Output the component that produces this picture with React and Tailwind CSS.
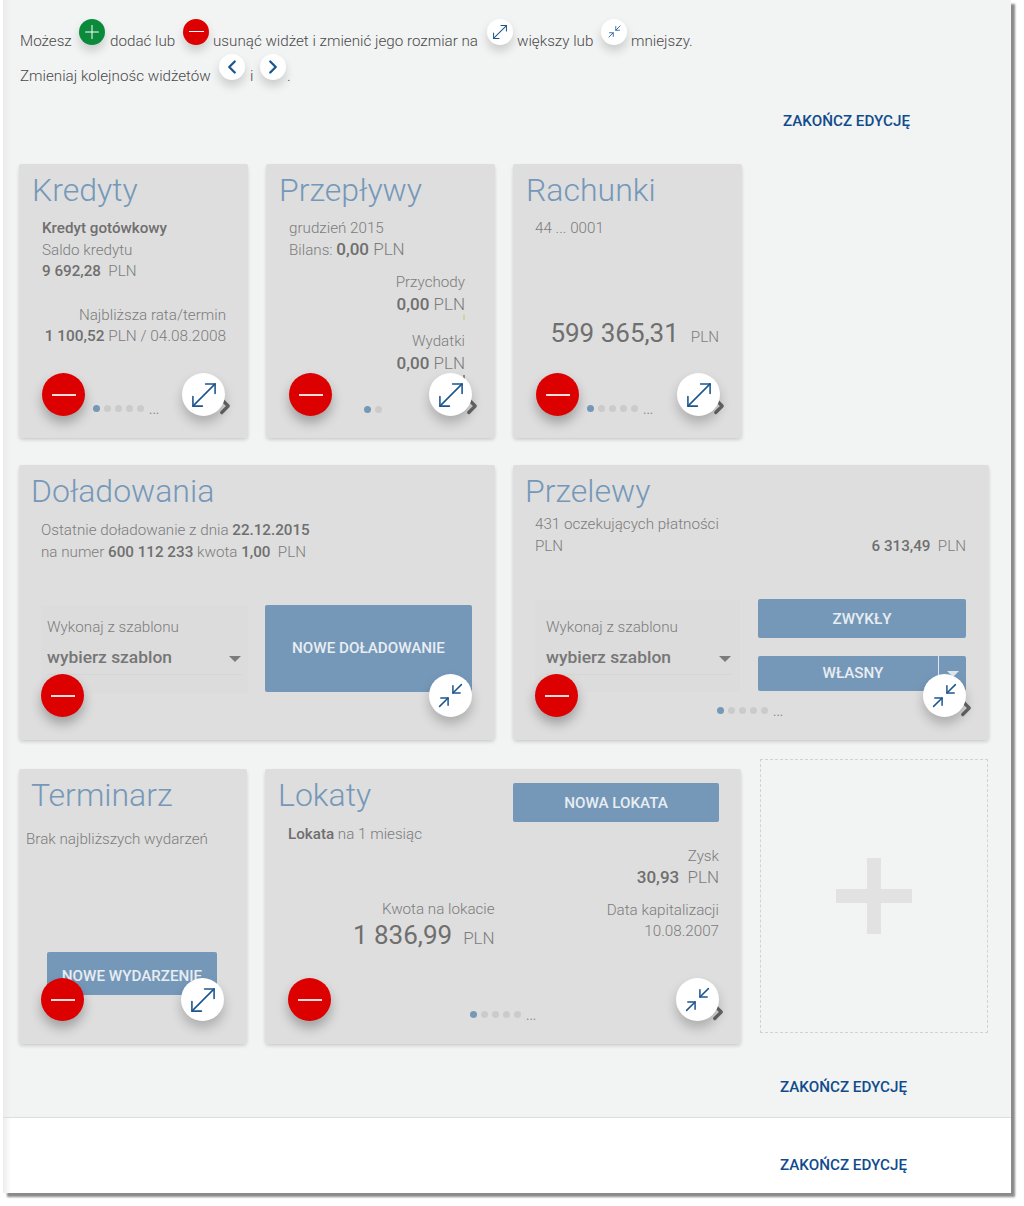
import { ChevronLeft, ChevronRight, Minimize2, MoveDiagonal, Plus } from 'lucide-react';

const SmallCircle = ({ className = 'bg-white', children }) => (
  <span className={`mt-[-20px] flex h-[26px] w-[26px] shrink-0 items-center justify-center rounded-full shadow-[0_6px_10px_rgba(0,0,0,0.16)] ${className}`}>
    {children}
  </span>
);

const Dots = ({ count = 5, more = true, className = '' }) => (
  <div className={`absolute bottom-[25px] flex items-center gap-[4px] ${className}`}>
    {Array.from({ length: count }).map((_, i) => (
      <span key={i} className={`h-[7px] w-[7px] rounded-full ${i === 0 ? 'bg-[#7598b9]' : 'bg-[#cbcbcb]'}`} />
    ))}
    {more && <span className="ml-[1px] pt-[2px] text-[13px] font-normal leading-[7px] text-[#8a8a8a]">...</span>}
  </div>
);

// red remove button, white resize button and the small arrow behind it
const CardActions = ({ big = true, arrow = true, className = 'left-[23px] right-[23px] bottom-[22px]' }) => (
  <>
    {arrow && <ChevronRight size={26} strokeWidth={3} className="absolute bottom-[19px] right-[10px] text-[#666]" />}
    <div className={`absolute flex justify-between ${className}`}>
      <button className="flex h-[43px] w-[43px] items-center justify-center rounded-full bg-[#dc0000] shadow-[0_7px_12px_rgba(0,0,0,0.28)]">
        <span className="h-[2px] w-[24px] bg-[#f7dcdc]" />
      </button>
      <button className="flex h-[43px] w-[43px] items-center justify-center rounded-full bg-white shadow-[0_7px_12px_rgba(0,0,0,0.22)]">
        {big ? (
          <MoveDiagonal size={38} strokeWidth={1} className="text-[#1b5590]" />
        ) : (
          <Minimize2 size={29} strokeWidth={1.25} className="text-[#1b5590]" />
        )}
      </button>
    </div>
  </>
);

const Card = ({ title, titleClass = 'pl-[13px]', className = '', children }) => (
  <section className={`relative h-[274px] shrink-0 overflow-hidden rounded-[2px] bg-[#dedede] shadow-[0_2px_4px_-1px_rgba(0,0,0,0.22)] ${className}`}>
    <h2 className={`h-[52px] text-[32px] font-light leading-[52px] text-[#7598b9] ${titleClass}`}>{title}</h2>
    {children}
  </section>
);

const TemplateSelect = ({ className = '' }) => (
  <div className={`h-[88px] bg-[#dcdcdc] pl-[6px] pr-[6px] pt-[11px] ${className}`}>
    <div className="leading-[22px]">Wykonaj z szablonu</div>
    <div className="mt-[5px] flex h-[32px] items-center justify-between border-b border-[#d6d6d6] pr-[1px]">
      <span className="pb-[4px] text-[17.4px] font-medium leading-[24px] text-[#767676]">wybierz szablon</span>
      <span className="h-0 w-0 border-x-[6px] border-t-[6px] border-x-transparent border-t-[#7c7c7c]" />
    </div>
  </div>
);

const EndEdit = ({ className = '' }) => (
  <a className={`text-[15.2px] font-medium leading-[20px] text-[#104c8c] ${className}`}>ZAKOŃCZ EDYCJĘ</a>
);

export default function App() {
  const b = 'font-medium text-[#6f6f6f]';
  const btn = 'rounded-[2px] bg-[#7598b9] text-[15.2px] font-medium text-[#e8edf2]';

  return (
    <div className="min-h-[1206px] bg-white font-['Roboto',sans-serif] text-[15.2px] font-light leading-[21.6px] text-[#7c7c7c]">
      <div className="ml-[3px] flex h-[1193px] w-[1008px] flex-col shadow-[4px_4px_2px_#8a8a8a]">
        <div className="h-[1118px] shrink-0 border-b border-[#dddddd] bg-[linear-gradient(90deg,#ececec,#f2f3f3_8px)]">
          <div className="whitespace-nowrap pl-[17px] pt-[24px] text-[15.2px] text-[#4a4a4a]">
            <div className="flex h-[35px] items-center">
              <span className="w-[59px]">Możesz</span>
              <SmallCircle className="bg-[#0a8a3a]"><Plus size={22} strokeWidth={1.1} className="text-white" /></SmallCircle>
              <span className="ml-[5px] w-[73px]">dodać lub</span>
              <SmallCircle className="bg-[#dc0000]"><span className="h-[1px] w-[15px] bg-white" /></SmallCircle>
              <span className="ml-[4px] w-[274px]">usunąć widżet i zmienić jego rozmiar na</span>
              <SmallCircle><MoveDiagonal size={22} strokeWidth={1.1} className="text-[#1b5590]" /></SmallCircle>
              <span className="ml-[4px] w-[84px]">większy lub</span>
              <SmallCircle><Minimize2 size={15} strokeWidth={1.3} className="text-[#1b5590]" /></SmallCircle>
              <span className="ml-[4px]">mniejszy.</span>
            </div>
            <div className="flex h-[35px] items-center">
              <span className="w-[199px]">Zmieniaj kolejnośc widżetów</span>
              <SmallCircle><ChevronLeft size={22} strokeWidth={2.5} className="text-[#1b5590]" /></SmallCircle>
              <span className="ml-[5px] w-[10px]">i</span>
              <SmallCircle><ChevronRight size={22} strokeWidth={2.5} className="text-[#1b5590]" /></SmallCircle>
              <span className="ml-[1px]">.</span>
            </div>
          </div>

          <div className="mt-[17px] flex justify-end pr-[101px]"><EndEdit /></div>

          {/* row 1 */}
          <div className="ml-[16px] mt-[33px] flex gap-[18px]">
            <Card title="Kredyty" className="w-[229px]">
              <div className="pl-[23px] pr-[22px] pt-[2px]">
                <div className={b}>Kredyt gotówkowy</div>
                <div>Saldo kredytu</div>
                <div><span className={b}>9 692,28</span>&nbsp; PLN</div>
                <div className="mt-[22px] whitespace-nowrap text-right">
                  <div>Najbliższa rata/termin</div>
                  <div className="text-[15.4px]"><span className={b}>1 100,52</span> PLN / 04.08.2008</div>
                </div>
              </div>
              <Dots className="left-[74px]" />
              <CardActions />
            </Card>

            <Card title="Przepływy" className="w-[229px]">
              <div className="pl-[23px] pr-[30px] pt-[2px]">
                <div>grudzień 2015</div>
                <div>Bilans: <span className="text-[17px] leading-none"><span className={b}>0,00</span> PLN</span></div>
                <div className="mt-[11px] text-right">
                  <div>Przychody</div>
                  <div className="text-[17px]"><span className={b}>0,00</span> PLN</div>
                  <div className="ml-auto h-[5px] w-[2px] bg-[#d3d3a0]" />
                  <div className="mt-[11px]">Wydatki</div>
                  <div className="text-[17px]"><span className={b}>0,00</span> PLN</div>
                  <div className="ml-auto h-[4px] w-[2px] bg-[#8a8a8a]" />
                </div>
              </div>
              <Dots count={2} more={false} className="left-[98px]" />
              <CardActions />
            </Card>

            <Card title="Rachunki" className="w-[229px]">
              <div className="pl-[22px] pr-[23px] pt-[2px]">
                <div>44 ... 0001</div>
                <div className="mt-[76px] flex items-baseline justify-end gap-[12px]">
                  <span className="text-[26px] font-normal leading-[34px] text-[#6f6f6f]">599 365,31</span>
                  <span>PLN</span>
                </div>
              </div>
              <Dots className="left-[74px]" />
              <CardActions className="left-[23px] right-[22px] bottom-[22px]" />
            </Card>
          </div>

          {/* row 2 */}
          <div className="ml-[16px] mt-[27px] flex gap-[18px]">
            <Card title="Doładowania" titleClass="pl-[12px]" className="h-[275px] w-[476px]">
              <div className="pl-[22px] pr-[22px] pt-[3px]">
                <div>Ostatnie doładowanie z dnia <span className={b}>22.12.2015</span></div>
                <div>na numer <span className={b}>600 112 233</span> kwota <span className={b}>1,00</span>&nbsp; PLN</div>
                <div className="mt-[42px] flex gap-[17px]">
                  <TemplateSelect className="w-[207px]" />
                  <button className={`h-[87px] w-[207px] pt-[1px] ${btn}`}>NOWE DOŁADOWANIE</button>
                </div>
              </div>
              <CardActions big={false} arrow={false} className="left-[22px] right-[23px] bottom-[23px]" />
            </Card>

            <Card title="Przelewy" titleClass="pl-[12px]" className="h-[275px] w-[476px]">
              <div className="-mt-[3px] pl-[22px] pr-[23px]">
                <div>431 oczekujących płatności</div>
                <div className="flex justify-between">
                  <span>PLN</span>
                  <span><span className={b}>6 313,49</span>&nbsp; PLN</span>
                </div>
                <div className="mt-[42px] flex gap-[18px]">
                  <TemplateSelect className="mt-[1px] h-[92px] w-[205px] pl-[11px] pr-[8px] pt-[16px]" />
                  <div className="flex w-[208px] flex-col gap-[18px]">
                    <button className={`h-[39px] pt-[2px] ${btn}`}>ZWYKŁY</button>
                    <div className={`flex h-[35px] ${btn}`}>
                      <button className="flex-1 border-r border-[#dfe6ee] pl-[10px] pt-[1px]">WŁASNY</button>
                      <span className="flex w-[27px] items-center justify-center">
                        <span className="h-0 w-0 border-x-[6px] border-t-[6px] border-x-transparent border-t-[#dfe6ee]" />
                      </span>
                    </div>
                  </div>
                </div>
              </div>
              <Dots className="left-[204px]" />
              <CardActions big={false} className="left-[22px] right-[23px] bottom-[23px]" />
            </Card>
          </div>

          {/* row 3 */}
          <div className="ml-[16px] mt-[19px] flex items-start">
            <Card title="Terminarz" titleClass="pl-[12px]" className="mt-[10px] h-[275px] w-[228px]">
              <div className="pl-[7px] pt-[8px]">Brak najbliższych wydarzeń</div>
              <button className={`absolute left-[28px] top-[183px] h-[43px] w-[170px] pt-[6px] ${btn}`}>NOWE WYDARZENIE</button>
              <CardActions arrow={false} className="left-[22px] right-[23px] bottom-[23px]" />
            </Card>

            <Card title="Lokaty" className="ml-[18px] mt-[10px] h-[275px] w-[476px]">
              <button className={`absolute right-[22px] top-[14px] h-[39px] w-[206px] pt-[2px] ${btn}`}>NOWA LOKATA</button>
              <div className="pl-[23px] pt-[3px]"><span className={b}>Lokata</span> na 1 miesiąc</div>
              <div className="flex justify-end pr-[22px] text-right">
                <div className="mr-[112px] mt-[53px]">
                  <div>Kwota na lokacie</div>
                  <div className="flex items-baseline justify-end gap-[11px]">
                    <span className="text-[26px] font-normal leading-[30px] text-[#6f6f6f]">1 836,99</span>
                    <span className="text-[17px]">PLN</span>
                  </div>
                </div>
                <div>
                  <div>Zysk</div>
                  <div className="text-[17px]"><span className={b}>30,93</span>&nbsp; PLN</div>
                  <div className="mt-[11px]">Data kapitalizacji</div>
                  <div>10.08.2007</div>
                </div>
              </div>
              <Dots className="left-[205px]" />
              <CardActions big={false} className="left-[23px] right-[22px] bottom-[23px]" />
            </Card>

            <div className="ml-[19px] flex h-[274px] w-[228px] items-center justify-center border border-dashed border-[#d2d2d2]">
              <div className="relative h-[76px] w-[76px]">
                <span className="absolute left-[31px] top-0 h-[76px] w-[14px] bg-[#e2e2e2]" />
                <span className="absolute left-0 top-[31px] h-[14px] w-[76px] bg-[#e2e2e2]" />
              </div>
            </div>
          </div>

          <div className="mt-[33px] flex justify-end pr-[104px]"><EndEdit /></div>
        </div>

        <div className="flex flex-1 justify-end bg-[linear-gradient(90deg,#ececec,#ffffff_8px)] pr-[104px] pt-[37px]"><EndEdit /></div>
      </div>
    </div>
  );
}
